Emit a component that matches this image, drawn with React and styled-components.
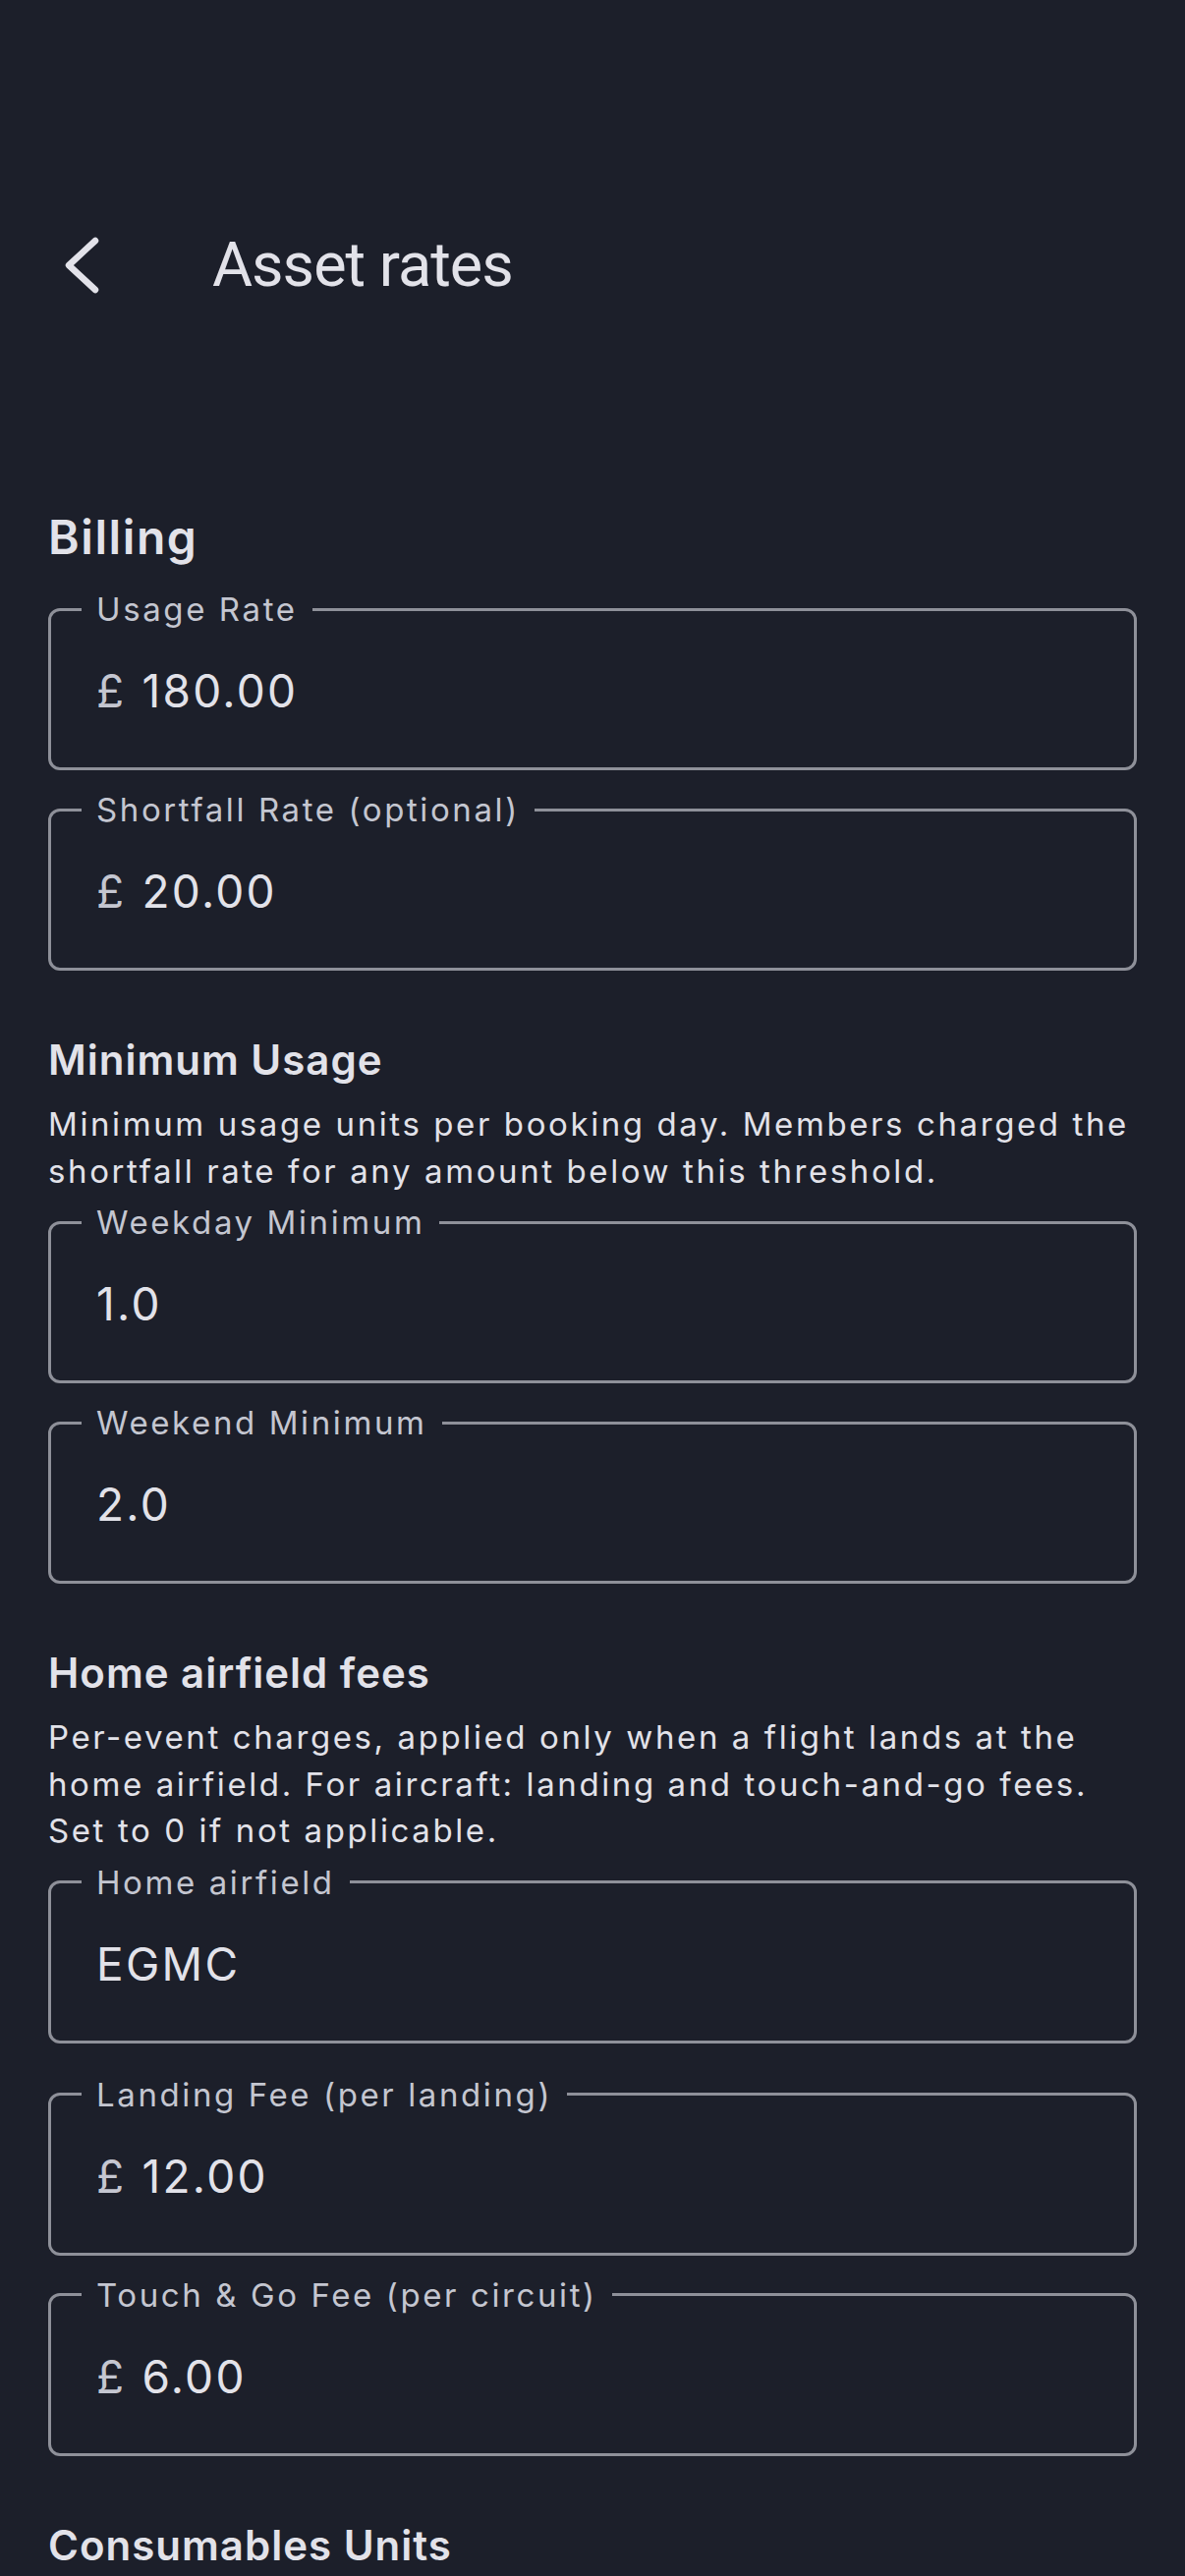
import React from "react";
import styled, { createGlobalStyle } from "styled-components";

const sections = [
	{
		title: "Billing",
		large: true,
		fields: [
			{ label: "Usage Rate", prefix: "£", value: "180.00" },
			{ label: "Shortfall Rate (optional)", prefix: "£", value: "20.00" },
		],
	},
	{
		title: "Minimum Usage",
		text: "Minimum usage units per booking day. Members charged the shortfall rate for any amount below this threshold.",
		fields: [
			{ label: "Weekday Minimum", value: "1.0" },
			{ label: "Weekend Minimum", value: "2.0" },
		],
	},
	{
		title: "Home airfield fees",
		text: "Per-event charges, applied only when a flight lands at the home airfield. For aircraft: landing and touch-and-go fees. Set to 0 if not applicable.",
		fields: [
			{ label: "Home airfield", value: "EGMC", spaced: true },
			{ label: "Landing Fee (per landing)", prefix: "£", value: "12.00" },
			{ label: "Touch & Go Fee (per circuit)", prefix: "£", value: "6.00" },
		],
	},
	{
		title: "Consumables Units",
		fields: [],
	},
];

const App = () => {
	return (
		<Screen>
			<GlobalStyle />
			<Header>
				<BackButton aria-label="Back">
					<svg width="40" height="60" viewBox="0 0 40 60" fill="none">
						<polyline
							points="33,5 6,30 33,55"
							stroke="currentColor"
							strokeWidth="6.5"
							strokeLinecap="round"
							strokeLinejoin="round"
						/>
					</svg>
				</BackButton>
				<Title>Asset rates</Title>
			</Header>

			{sections.map((section, i) => (
				<Section key={section.title} $first={i === 0}>
					<SectionTitle $large={section.large}>{section.title}</SectionTitle>
					{section.text && <Description>{section.text}</Description>}
					{section.fields.map((field, j) => (
						<Field
							key={field.label}
							$after={j === 0 ? (section.text ? "text" : "title") : "field"}
							$spaced={section.fields[j - 1] && section.fields[j - 1].spaced}
						>
							<Legend>{field.label}</Legend>
							<ValueRow>
								{field.prefix && <Prefix>{field.prefix}</Prefix>}
								<Value>{field.value}</Value>
							</ValueRow>
						</Field>
					))}
				</Section>
			))}
		</Screen>
	);
};

const GlobalStyle = createGlobalStyle`
	html, body {
		margin: 0;
		padding: 0;
		background: #1c1f2a;
	}
	body {
		font-family: Inter, "Noto Sans", sans-serif;
		color: #e2e2e9;
		-webkit-font-smoothing: antialiased;
	}
	* {
		box-sizing: border-box;
	}
`;

const Screen = styled.div`
	min-height: 2622px;
	background-color: #1c1f2a;
	padding: 215px 49px 0;
`;

const Header = styled.header`
	display: flex;
	align-items: center;
	height: 110px;
	padding-left: 15px;
`;

const BackButton = styled.button`
	display: flex;
	width: 40px;
	height: 60px;
	padding: 0;
	border: none;
	background: none;
	color: #e2e2e9;
	cursor: pointer;
`;

const Title = styled.h1`
	margin: 0 0 0 112px;
	font-family: Roboto, "Noto Sans", sans-serif;
	font-weight: 400;
	font-size: 63px;
	line-height: 110px;
	letter-spacing: -1px;
	color: #e2e2e9;
`;

const Section = styled.section`
	display: flex;
	flex-direction: column;
	margin-top: ${(p) => (p.$first ? "194px" : "66px")};
`;

const SectionTitle = styled.h2`
	margin: 0;
	font-weight: 600;
	font-size: ${(p) => (p.$large ? "48px" : "42px")};
	line-height: ${(p) => (p.$large ? "56px" : "50px")};
	letter-spacing: ${(p) => (p.$large ? "1.6px" : "1px")};
	color: #e2e2e9;
`;

const Description = styled.p`
	margin: 17px 0 0;
	font-size: 33px;
	line-height: 47.5px;
	letter-spacing: 2.6px;
	color: #e2e2e9;
`;

const Field = styled.fieldset`
	margin: ${(p) =>
			p.$after === "title" ? "25px" : p.$after === "text" ? "8px" : p.$spaced ? "32px" : "20px"}
		0 0;
	padding: 0 0 0 31px;
	min-width: 0;
	border: 3px solid #8e9099;
	border-radius: 12px;
`;

const Legend = styled.legend`
	padding: 0 15px;
	font-size: 33px;
	line-height: 40px;
	letter-spacing: 2.6px;
	color: #c4c6d0;
`;

const ValueRow = styled.div`
	display: flex;
	align-items: center;
	height: 141px;
	padding: 0 0 15px 15px;
	font-size: 46px;
	line-height: 56px;
	letter-spacing: 2.3px;
`;

const Prefix = styled.span`
	margin-right: 16px;
	color: #c4c6d0;
`;

const Value = styled.span`
	color: #e2e2e9;
`;

export default App;
